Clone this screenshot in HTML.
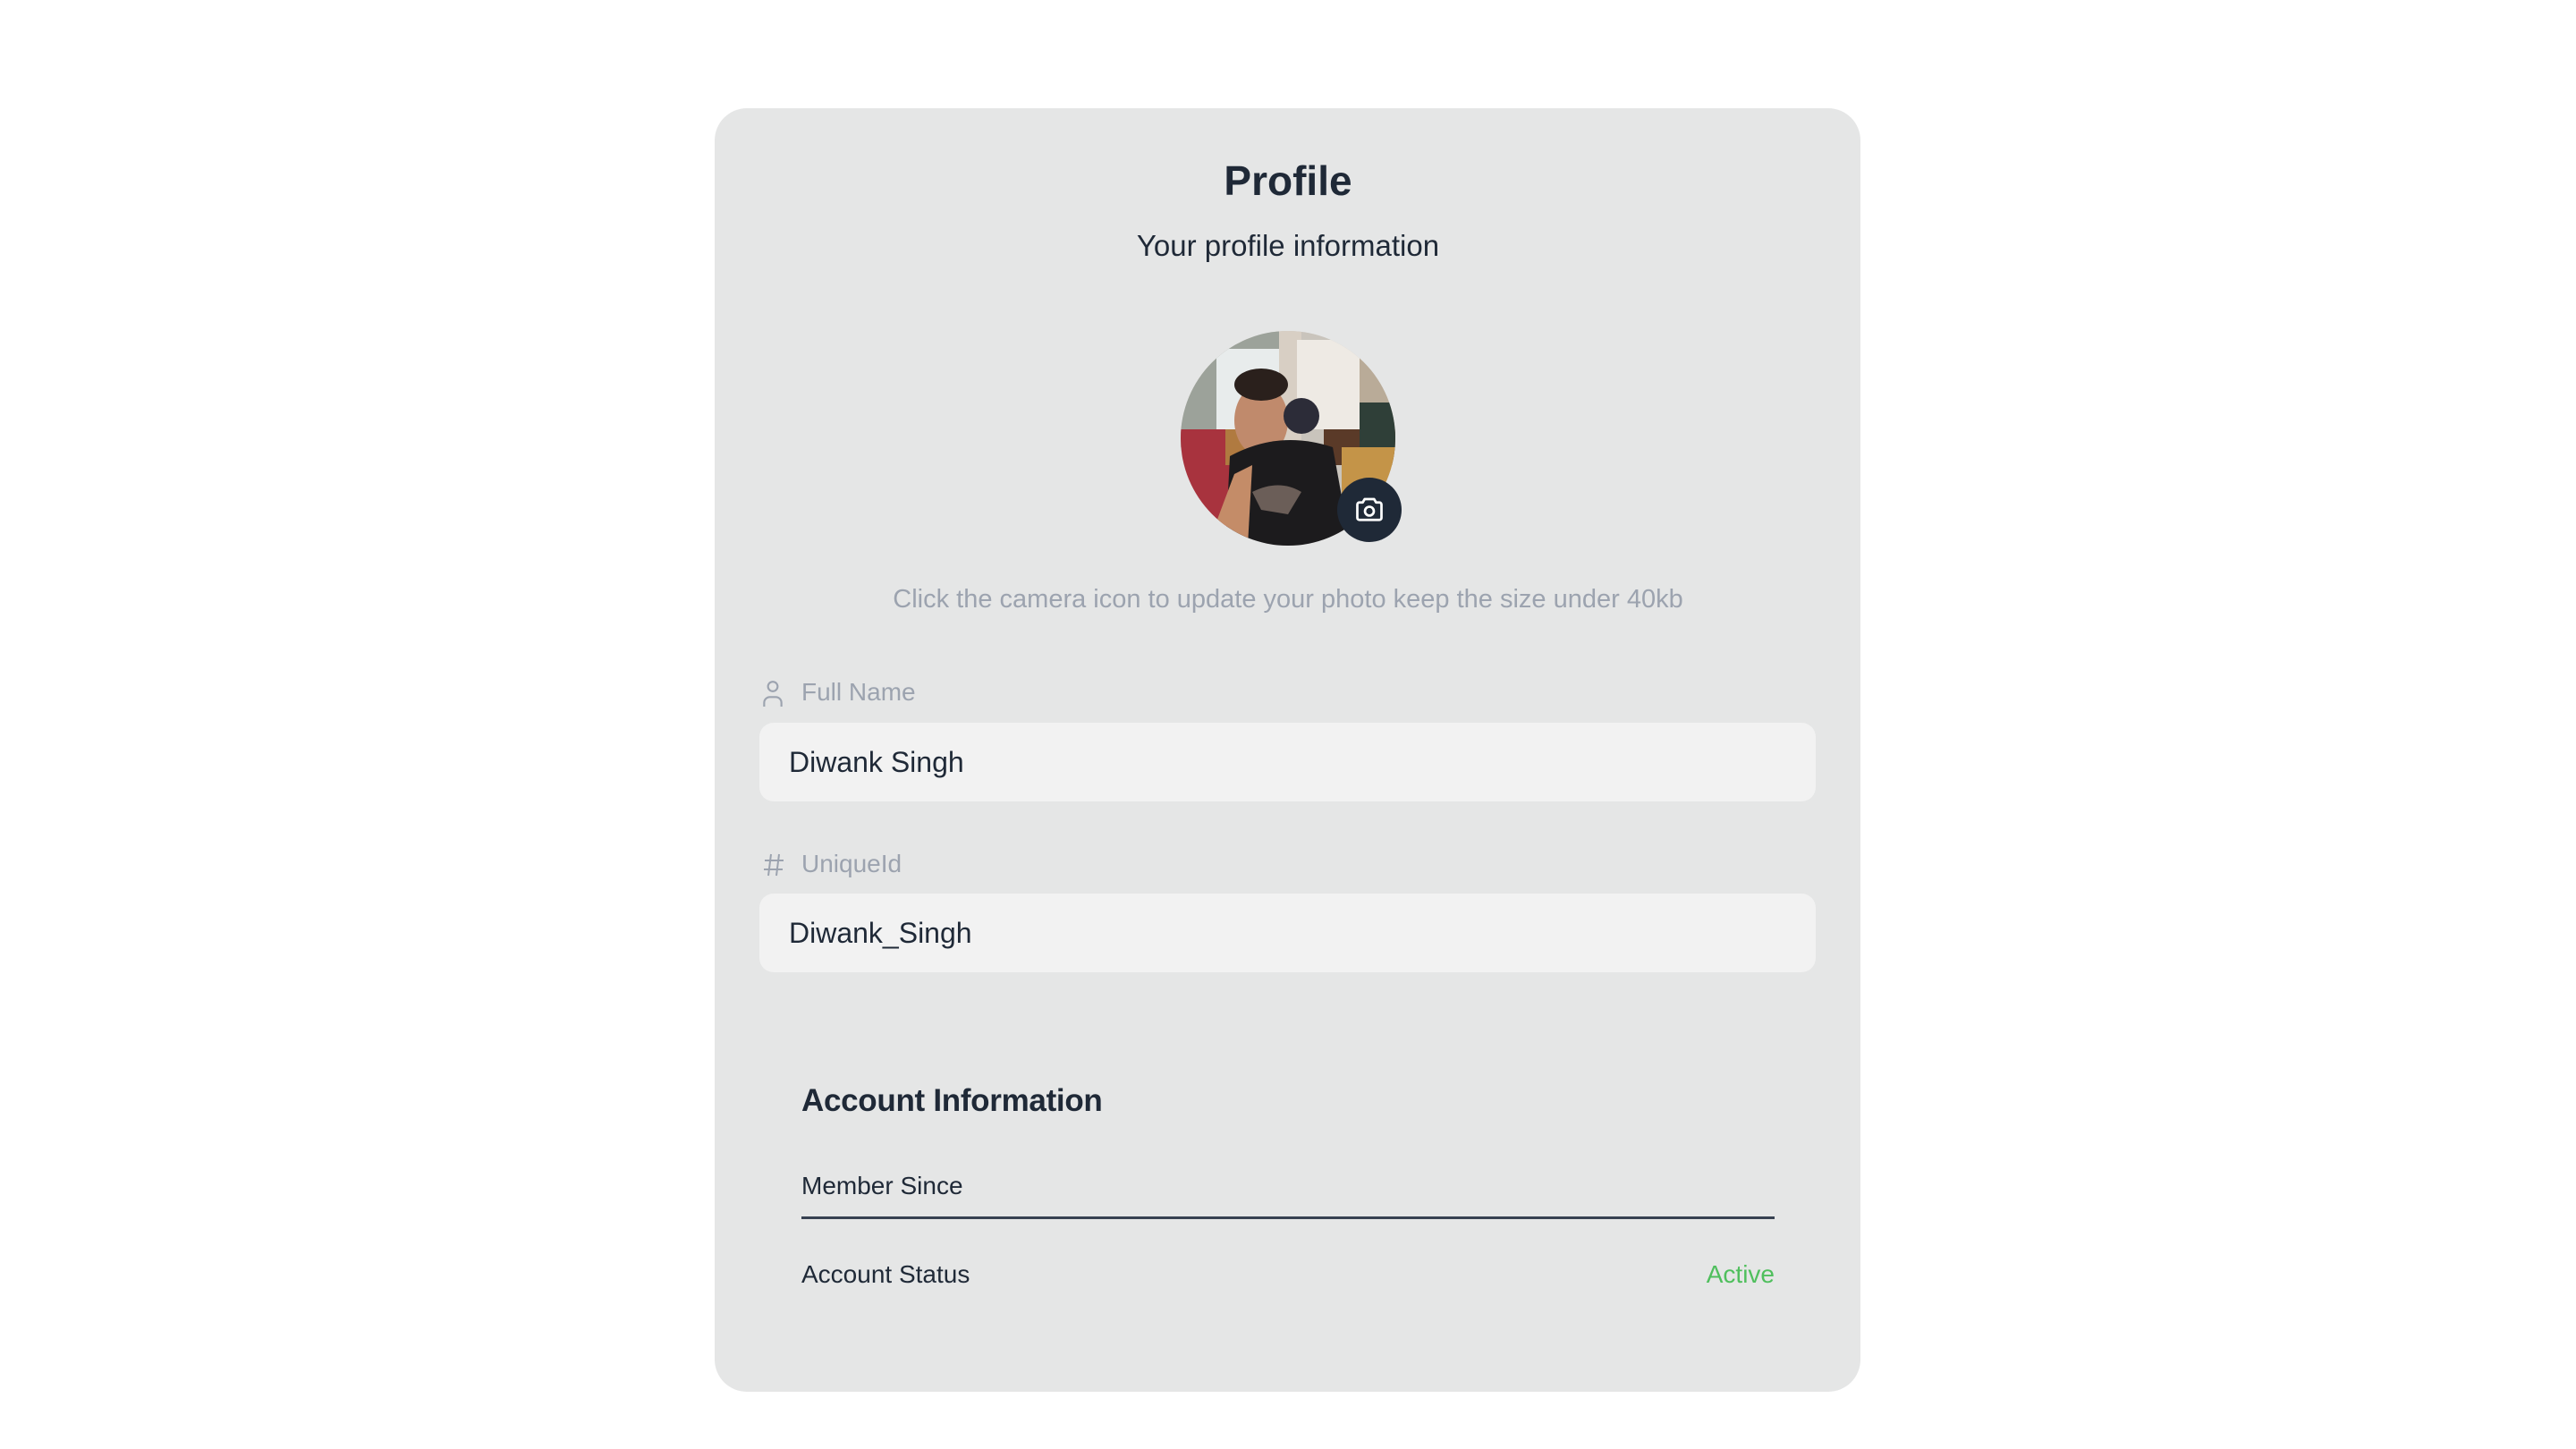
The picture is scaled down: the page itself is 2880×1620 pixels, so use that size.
<!DOCTYPE html>
<html><head><meta charset="utf-8"><style>
*{margin:0;padding:0;box-sizing:border-box}
body{width:2880px;height:1620px;background:#fff;font-family:"Liberation Sans",sans-serif;position:relative;overflow:hidden}
.card{position:absolute;left:799px;top:121px;width:1281px;height:1435px;background:#e5e6e6;border-radius:36px}
.abs{position:absolute;white-space:nowrap}
.c{left:0;width:2880px;text-align:center}
.inp{position:absolute;left:849px;width:1181px;height:88px;background:#f2f2f2;border-radius:16px;font-size:32px;color:#1f2937;padding-left:33px;line-height:88px}
.lbl{font-size:28px;color:#9ca3af;left:896px}
</style></head><body>
<div class="card"></div>
<div class="abs c" style="top:175px;font-size:46px;font-weight:bold;color:#1f2937">Profile</div>
<div class="abs c" style="top:256px;font-size:33px;color:#1f2937">Your profile information</div>
<svg class="abs" style="left:1320px;top:370px" width="240" height="240" viewBox="0 0 240 240">
<defs><clipPath id="cp"><circle cx="120" cy="120" r="120"/></clipPath></defs>
<g clip-path="url(#cp)">
<rect width="240" height="240" fill="#c9c4bc"/>
<rect x="0" y="0" width="110" height="130" fill="#9ca29a"/>
<rect x="40" y="20" width="70" height="90" fill="#e8ecec"/>
<rect x="110" y="0" width="25" height="130" fill="#d8cfc4"/>
<rect x="130" y="10" width="70" height="100" fill="#eeeae4"/>
<rect x="200" y="10" width="40" height="130" fill="#b9ab98"/>
<rect x="0" y="110" width="60" height="110" fill="#a8333e"/>
<rect x="50" y="110" width="30" height="40" fill="#b07a40"/>
<rect x="160" y="110" width="80" height="40" fill="#5a3a28"/>
<rect x="200" y="80" width="40" height="50" fill="#2f3f38"/>
<rect x="180" y="130" width="60" height="60" fill="#c49448"/>
<ellipse cx="90" cy="100" rx="30" ry="40" fill="#c08a6c"/>
<ellipse cx="90" cy="60" rx="30" ry="18" fill="#2a201c"/>
<ellipse cx="135" cy="95" rx="20" ry="20" fill="#2c2c38"/>
<path d="M55 140 Q110 110 170 130 L190 240 L50 240 Z" fill="#1c1b1d"/>
<path d="M80 180 Q110 165 135 180 L120 205 L90 200Z" fill="#6b5e58"/>
<path d="M30 240 L60 160 L80 150 L75 240Z" fill="#c48c68"/>
</g></svg>
<div class="abs" style="left:1495px;top:534px;width:72px;height:72px;border-radius:50%;background:#1f2937"></div>
<svg class="abs" style="left:1513px;top:552px" width="36" height="36" viewBox="0 0 24 24" fill="none" stroke="#fff" stroke-width="1.8" stroke-linejoin="round"><path d="M3 8a1.5 1.5 0 0 1 1.5-1.5h2.5l1.5-2.5h7l1.5 2.5h2.5A1.5 1.5 0 0 1 21 8v10a1.5 1.5 0 0 1-1.5 1.5h-15A1.5 1.5 0 0 1 3 18z"/><circle cx="12" cy="13" r="3.3"/></svg>
<div class="abs c" style="top:654px;font-size:29px;color:#9ca3af">Click the camera icon to update your photo keep the size under 40kb</div>
<svg class="abs" style="left:851px;top:760px" width="26" height="30" viewBox="0 0 24 28" fill="none" stroke="#9ca3af" stroke-width="2"><circle cx="12" cy="7" r="5"/><path d="M3 28v-4a6 6 0 0 1 6-6h6a6 6 0 0 1 6 6v4"/></svg>
<div class="abs lbl" style="top:758px">Full Name</div>
<div class="inp" style="top:808px">Diwank Singh</div>
<svg class="abs" style="left:852px;top:953px" width="26" height="28" viewBox="0 0 26 28" fill="none" stroke="#9ca3af" stroke-width="2"><path d="M10 2L7 26M19 2L16 26M3 9h21M2 19h21"/></svg>
<div class="abs lbl" style="top:950px">UniqueId</div>
<div class="inp" style="top:999px">Diwank_Singh</div>
<div class="abs" style="left:896px;top:1211px;font-size:35px;font-weight:bold;color:#1f2937;letter-spacing:-0.3px">Account Information</div>
<div class="abs" style="left:896px;top:1310px;font-size:28px;color:#1f2937">Member Since</div>
<div class="abs" style="left:896px;top:1360px;width:1088px;height:3px;background:#374151"></div>
<div class="abs" style="left:896px;top:1409px;font-size:28px;color:#1f2937">Account Status</div>
<div class="abs" style="right:896px;top:1409px;font-size:28px;color:#4fbf5d">Active</div>
</body></html>
